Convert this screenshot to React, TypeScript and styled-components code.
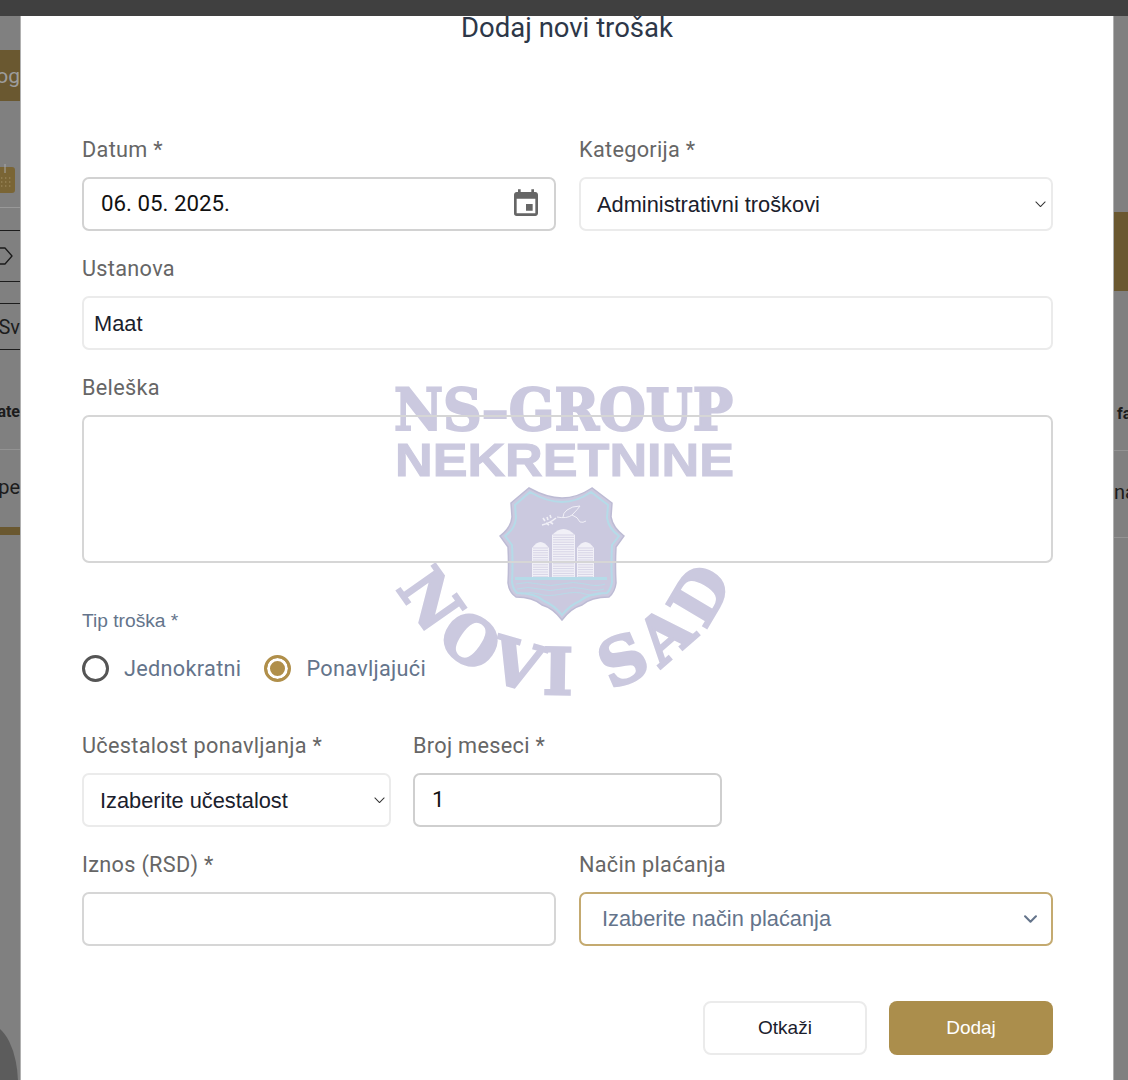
import React from "react";
import styled, { createGlobalStyle } from "styled-components";
import { MdEvent } from "react-icons/md";

const GlobalStyle = createGlobalStyle`
  html, body {
    margin: 0;
    padding: 0;
    height: 1080px;
    overflow: hidden;
    background: #808080;
  }
  * {
    box-sizing: border-box;
  }
`;

function Chevron({ bold }: { bold?: boolean }) {
  return (
    <svg width={bold ? 13 : 11} height={bold ? 8 : 6.5} viewBox="0 0 12 7" fill="none">
      <path
        d="M1 1l5 5 5-5"
        stroke={bold ? "#64748b" : "#333"}
        strokeWidth={bold ? 1.9 : 1.1}
        strokeLinecap="round"
        strokeLinejoin="round"
      />
    </svg>
  );
}

function BuildingHatch({ x, top, width, bottom }: { x: number; top: number; width: number; bottom: number }) {
  const lines = [];
  for (let y = top + 8; y < bottom; y += 2.4) {
    lines.push(<path key={y} d={`M${x + 1} ${y}h${width - 2}`} stroke="#cbc9df" strokeWidth="0.7" />);
  }
  return (
    <g>
      <path
        d={`M${x} ${bottom}V${top + 8}Q${x + width / 2} ${top - 4} ${x + width} ${top + 8}V${bottom}z`}
        fill="#f1f0f7"
      />
      {lines}
    </g>
  );
}

function Watermark() {
  return (
    <WatermarkArt width="370" height="340" viewBox="0 0 370 340">
      <text x="14" y="60" fontFamily="'DejaVu Serif', serif" fontWeight="700" fontSize="57" textLength="339" lengthAdjust="spacingAndGlyphs" fill="#cbc9df" stroke="#cbc9df" strokeWidth="2">
        NS–GROUP
      </text>
      <text x="15" y="106" fontFamily="'Liberation Sans', sans-serif" fontWeight="700" fontSize="46" textLength="339" lengthAdjust="spacingAndGlyphs" fill="#cbc9df" stroke="#cbc9df" strokeWidth="1">
        NEKRETNINE
      </text>

      <g transform="translate(-1 0)">
        <path
          d="M150 118Q168 128 183 128Q198 128 213 118L233 133L232 147Q234 158 245 166L237 177Q236 195 237 213Q236 222 230 227Q212 227 203 235Q192 238 183 250Q174 238 163 235Q154 227 137 227Q130 222 129 213Q130 195 129 177L121 166Q132 158 133 147L132 133z"
          fill="#cbc9df"
          stroke="#bdbbd4"
          strokeWidth="1.5"
        />
        <path
          d="M151 122Q168 132 183 132Q198 132 212 122L229 135L228 148Q230 159 240 166L233 175Q232 195 233 212Q232 219 228 223Q210 223 201 231Q191 235 183 245Q175 235 165 231Q156 223 138 223Q134 219 133 212Q134 195 133 175L126 166Q136 159 137 148L136 135z"
          fill="none"
          stroke="#b5dbe8"
          strokeWidth="2"
        />

        <BuildingHatch x={153} top={170} width={17} bottom={207} />
        <BuildingHatch x={173} top={157} width={23} bottom={207} />
        <BuildingHatch x={198} top={170} width={17} bottom={207} />

        <path d="M136 208.500h92" stroke="#b5dbe8" strokeWidth="3" />
        <path d="M137 214q11 -3 23 0t23 0t23 0t20 0M138 219q11 -3 22 0t23 0t23 0t19 0M142 224q10 -3 18 0t23 0t23 0t16 0" stroke="#b5dbe8" strokeWidth="0.9" fill="none" />

        <path d="M163 155q8 -2 14 -7M166 151l-2 -3M169 150l-1 -3M172 148l-1 -3M167 153l3 2M171 152l3 2" stroke="#f1f0f7" strokeWidth="1.6" fill="none" />
        <path d="M178 147q10 2 15 -2q6 -6 8 -9q-8 0 -13 4q-4 3 -4 7M193 145q6 2 8 7q3 1 6 -1" stroke="#f1f0f7" strokeWidth="1" fill="none" />
      </g>

      <path id="novi-sad-arc" d="M18 217A185 192 0 0 0 350 217" fill="none" />
      <text fontFamily="'DejaVu Serif', serif" fontWeight="700" fontSize="64" fill="#cbc9df" stroke="#cbc9df" strokeWidth="2.500" letterSpacing="8">
        <textPath href="#novi-sad-arc" startOffset="0">
          NOVI SAD
        </textPath>
      </text>
    </WatermarkArt>
  );
}

function App() {
  return (
    <>
      <GlobalStyle />
      <TopBar />
      <Stage>
        <LeftStrip>
          <GoldBlock $top={34} $height={51}>
            <StripText $size={21} $light>og</StripText>
          </GoldBlock>
          <CalendarSlot>
            <svg width="16" height="33" viewBox="0 0 16 33">
              <path d="M0 7h12a3 3 0 0 1 3 3v20a3 3 0 0 1-3 3H0z" fill="#7a6535" />
              <path d="M5 4v9" stroke="#a9a9a9" strokeWidth="1" />
              <path d="M1 18h12M1 22h12M1 26h12" stroke="#a39166" strokeWidth="1.200" strokeDasharray="1.400 2.600" />
            </svg>
          </CalendarSlot>
          <Divider $color="#999" />
          <TagRow>
            <svg width="14" height="20" viewBox="0 0 14 20" fill="none">
              <path d="M-6 2h11l7 8-7 8H-6z" stroke="#1a1a1a" strokeWidth="1.300" strokeLinejoin="round" />
            </svg>
          </TagRow>
          <StripRow $height={47}>
            <StripText $size={20}>Sv</StripText>
          </StripRow>
          <HeaderCell>
            <StripText $size={16} $weight={700}>ate</StripText>
          </HeaderCell>
          <BodyCell>
            <StripText $size={20}>pe</StripText>
          </BodyCell>
          <ProgressBar />
          <CornerShape />
        </LeftStrip>

        <Modal>
          <Watermark />
          <Title>Dodaj novi trošak</Title>
          <Form>
            <TwoColumns>
              <Field>
                <Label>Datum *</Label>
                <Control $border="#d2d2d2" $pad={17}>
                  <DateValue>06. 05. 2025.</DateValue>
                  <CalendarIcon><MdEvent size={32} /></CalendarIcon>
                </Control>
              </Field>
              <Field>
                <Label>Kategorija *</Label>
                <Control $pad={16} $right={5}>
                  <SelectValue>Administrativni troškovi</SelectValue>
                  <Chevron />
                </Control>
              </Field>
            </TwoColumns>

            <Field>
              <Label>Ustanova</Label>
              <Control $pad={10}>
                <SelectValue>Maat</SelectValue>
              </Control>
            </Field>

            <Field>
              <Label>Beleška</Label>
              <Control $border="#d6d6d6" $height={148} />
            </Field>

            <TypeGroup>
              <TypeLabel>Tip troška *</TypeLabel>
              <RadioRow>
                <RadioOption>
                  <Radio />
                  <RadioText>Jednokratni</RadioText>
                </RadioOption>
                <RadioOption>
                  <Radio $checked />
                  <RadioText>Ponavljajući</RadioText>
                </RadioOption>
              </RadioRow>
            </TypeGroup>

            <RepeatRow>
              <Field>
                <Label>Učestalost ponavljanja *</Label>
                <Control $pad={16} $right={4}>
                  <SelectValue>Izaberite učestalost</SelectValue>
                  <Chevron />
                </Control>
              </Field>
              <Field>
                <Label>Broj meseci *</Label>
                <Control $border="#cfcfcf" $pad={17}>
                  <DateValue>1</DateValue>
                </Control>
              </Field>
            </RepeatRow>

            <TwoColumns>
              <Field>
                <Label>Iznos (RSD) *</Label>
                <Control $border="#d6d6d6" />
              </Field>
              <Field>
                <Label>Način plaćanja</Label>
                <Control $border="#c4aa70" $pad={21} $right={14}>
                  <PlaceholderValue>Izaberite način plaćanja</PlaceholderValue>
                  <Chevron bold />
                </Control>
              </Field>
            </TwoColumns>

            <Actions>
              <CancelButton>Otkaži</CancelButton>
              <SubmitButton>Dodaj</SubmitButton>
            </Actions>
          </Form>
        </Modal>

        <RightStrip>
          <GoldBlock $top={196} $height={79} />
          <RightHeader>
            <StripText $size={16} $weight={700}>fa</StripText>
          </RightHeader>
          <RightBody>
            <StripText $size={20}>na</StripText>
          </RightBody>
        </RightStrip>
      </Stage>
    </>
  );
}

const TopBar = styled.div`
  height: 16px;
  background: #404040;
`;

const Stage = styled.div`
  display: grid;
  grid-template-columns: 20px 1094px 14px;
  height: 1064px;
  overflow: hidden;
`;

const LeftStrip = styled.div`
  position: relative;
  display: flex;
  flex-direction: column;
  overflow: hidden;
  background: #808080;
`;

const RightStrip = styled.div`
  display: flex;
  flex-direction: column;
  overflow: hidden;
  background: #808080;
`;

const GoldBlock = styled.div<{ $top: number; $height: number }>`
  display: flex;
  justify-content: flex-end;
  align-items: center;
  flex: none;
  margin-top: ${(p) => p.$top}px;
  height: ${(p) => p.$height}px;
  background: #6a5830;
`;

const StripText = styled.span<{ $size: number; $weight?: number; $light?: boolean }>`
  flex: none;
  font-family: "Roboto", sans-serif;
  font-size: ${(p) => p.$size}px;
  font-weight: ${(p) => p.$weight ?? 400};
  color: ${(p) => (p.$light ? "#9d9d9d" : "#1c1c1c")};
  white-space: nowrap;
`;

const CalendarSlot = styled.div`
  display: flex;
  align-items: flex-end;
  height: 92px;
`;

const Divider = styled.div<{ $color: string }>`
  flex: none;
  margin-top: 14px;
  height: 1px;
  background: ${(p) => p.$color};
`;

const TagRow = styled.div`
  display: flex;
  align-items: center;
  flex: none;
  margin-top: 22px;
  height: 52px;
  border-top: 1px solid #1c1c1c;
  border-bottom: 1px solid #1c1c1c;
`;

const StripRow = styled.div<{ $height: number }>`
  display: flex;
  justify-content: flex-end;
  align-items: center;
  flex: none;
  margin-top: 21px;
  height: ${(p) => p.$height}px;
  border-top: 1px solid #1c1c1c;
  border-bottom: 1px solid #1c1c1c;
`;

const HeaderCell = styled.div`
  display: flex;
  justify-content: flex-end;
  align-items: center;
  flex: none;
  height: 100px;
  padding-top: 24px;
  border-bottom: 1px solid #939393;
`;

const BodyCell = styled.div`
  display: flex;
  justify-content: flex-end;
  align-items: center;
  flex: none;
  height: 77px;
  padding-bottom: 4px;
`;

const ProgressBar = styled.div`
  flex: none;
  height: 8px;
  background: #6a5830;
`;

const CornerShape = styled.div`
  position: absolute;
  left: -42px;
  top: 1008px;
  width: 60px;
  height: 120px;
  border-radius: 50%;
  background: #5c5c5c;
`;

const RightHeader = styled.div`
  display: flex;
  align-items: center;
  flex: none;
  height: 160px;
  padding-top: 85px;
  padding-left: 3px;
  border-bottom: 1px solid #939393;
`;

const RightBody = styled.div`
  display: flex;
  align-items: center;
  flex: none;
  height: 87px;
  padding-bottom: 4px;
  border-bottom: 1px solid #939393;
`;

const Modal = styled.div`
  position: relative;
  display: flex;
  flex-direction: column;
  overflow: hidden;
  background: #fff;
  border-left: 1px solid #b0b0b0;
  border-right: 1px solid #b0b0b0;
`;

const WatermarkArt = styled.svg`
  position: absolute;
  left: 359px;
  top: 354px;
`;

const Title = styled.h2`
  position: relative;
  margin: 0;
  height: 24px;
  font-family: "Roboto", sans-serif;
  font-size: 27.500px;
  font-weight: 400;
  line-height: 24px;
  text-align: center;
  color: #2d3748;
`;

const Form = styled.div`
  position: relative;
  display: flex;
  flex-direction: column;
  gap: 23px;
  margin-top: 95px;
  padding: 0 60px 0 61px;
`;

const TwoColumns = styled.div`
  display: grid;
  grid-template-columns: 474px 474px;
  column-gap: 23px;
`;

const RepeatRow = styled.div`
  display: grid;
  grid-template-columns: 309px 309px;
  column-gap: 22px;
`;

const Field = styled.div`
  display: flex;
  flex-direction: column;
  gap: 14px;
`;

const Label = styled.label`
  height: 28px;
  padding-top: 1px;
  font-family: "Roboto", sans-serif;
  font-size: 21.700px;
  line-height: 28px;
  letter-spacing: 0.3px;
  color: #666;
`;

const Control = styled.div<{ $border?: string; $height?: number; $pad?: number; $right?: number }>`
  display: flex;
  justify-content: space-between;
  align-items: center;
  height: ${(p) => p.$height ?? 54}px;
  padding: 0 ${(p) => p.$right ?? 11}px 0 ${(p) => p.$pad ?? 11}px;
  border: 2px solid ${(p) => p.$border ?? "#ebebeb"};
  border-radius: 7px;
`;

const DateValue = styled.span`
  padding-bottom: 2px;
  font-family: "Roboto", sans-serif;
  font-size: 22.300px;
  color: #111;
`;

const SelectValue = styled.span`
  padding-top: 2px;
  font-family: "Liberation Sans", sans-serif;
  font-size: 21.800px;
  color: #1a202c;
`;

const PlaceholderValue = styled.span`
  font-family: "Liberation Sans", sans-serif;
  font-size: 21.800px;
  color: #64748b;
`;

const CalendarIcon = styled.span`
  display: flex;
  margin-right: 1px;
  color: #666;
`;

const TypeGroup = styled.div`
  display: flex;
  flex-direction: column;
  gap: 22px;
  margin-top: 23px;
  margin-bottom: 26px;
`;

const TypeLabel = styled.span`
  height: 24px;
  font-family: "Liberation Sans", sans-serif;
  font-size: 19.200px;
  line-height: 24px;
  color: #64748b;
`;

const RadioRow = styled.div`
  display: flex;
  gap: 23px;
`;

const RadioOption = styled.div`
  display: flex;
  align-items: center;
  gap: 15px;
`;

const Radio = styled.span<{ $checked?: boolean }>`
  display: block;
  width: 27px;
  height: 27px;
  border-radius: 50%;
  border: 3px solid ${(p) => (p.$checked ? "#b08f4a" : "#555")};
  background: ${(p) => (p.$checked ? "#b08f4a" : "transparent")};
  box-shadow: ${(p) => (p.$checked ? "inset 0 0 0 3px #fff" : "none")};
`;

const RadioText = styled.span`
  font-family: "Roboto", sans-serif;
  font-size: 21.700px;
  letter-spacing: 0.3px;
  color: #64748b;
`;

const Actions = styled.div`
  display: flex;
  justify-content: flex-end;
  gap: 22px;
  margin-top: 32px;
`;

const CancelButton = styled.button`
  width: 164px;
  height: 54px;
  background: #fff;
  border: 2px solid #ebebeb;
  border-radius: 8px;
  font-family: "Liberation Sans", sans-serif;
  font-size: 19px;
  color: #1a202c;
`;

const SubmitButton = styled.button`
  width: 164px;
  height: 54px;
  background: #ab8e4c;
  border: none;
  border-radius: 8px;
  font-family: "Liberation Sans", sans-serif;
  font-size: 19px;
  color: #fff;
`;

export default App;
